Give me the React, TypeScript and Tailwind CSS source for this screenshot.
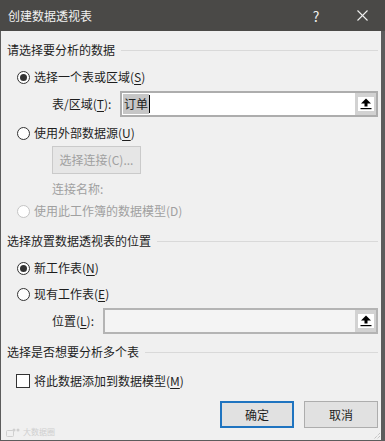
import React from "react";

const U = ({ children }: { children: React.ReactNode }) => (
  <span className="underline underline-offset-[2px] decoration-[1px]">{children}</span>
);

function Radio({ checked = false, disabled = false }: { checked?: boolean; disabled?: boolean }) {
  return (
    <span
      className={
        "w-[13px] h-[13px] rounded-full border flex items-center justify-center bg-white shrink-0 " +
        (disabled ? "border-[#c4c4c4]" : "border-[#333333]")
      }
    >
      {checked && <span className="w-[7px] h-[7px] rounded-full bg-[#333333]" />}
    </span>
  );
}

function UpArrow() {
  return (
    <svg width="12" height="12" viewBox="0 0 12 12">
      <polygon points="6,0.5 11,5.5 1,5.5" fill="#000" />
      <rect x="4.5" y="5" width="3" height="3.5" fill="#000" />
      <rect x="0.5" y="10" width="11" height="1.2" fill="#000" />
    </svg>
  );
}

function RefButton() {
  return (
    <div className="w-[21px] h-full bg-[#d2d2d2] flex items-center justify-center">
      <div className="w-[16px] h-[14px] bg-white flex items-center justify-center">
        <UpArrow />
      </div>
    </div>
  );
}

function Section({ title, className = "" }: { title: string; className?: string }) {
  return (
    <div className={"h-[20px] flex items-center pl-[6px] pr-[3px] " + className}>
      <span className="text-[#1e1e1e] whitespace-nowrap">{title}</span>
      <span className="flex-1 h-px bg-[#d9d9d9] ml-[6px]" />
    </div>
  );
}

export default function App() {
  return (
    <div
      className="w-[385px] h-[441px] flex flex-col bg-[#f0f0f0] relative text-[12px] leading-[16px] text-[#1e1e1e] overflow-hidden"
      style={{ fontFamily: '"Noto Sans CJK SC", "Noto Sans", sans-serif' }}
    >
      {/* Title bar */}
      <div className="h-[31px] bg-[#4a4947] flex items-center shrink-0">
        <div className="flex-1 pl-[8px] text-[#f2f2f2] text-[12px]">创建数据透视表</div>
        <div className="w-[46px] h-full flex items-center justify-center text-[#f0f0f0] text-[14px]">?</div>
        <div className="w-[46px] h-full flex items-center justify-center">
          <svg width="11" height="11" viewBox="0 0 11 11">
            <line x1="0.5" y1="0.5" x2="10.5" y2="10.5" stroke="#f0f0f0" strokeWidth="1.1" />
            <line x1="10.5" y1="0.5" x2="0.5" y2="10.5" stroke="#f0f0f0" strokeWidth="1.1" />
          </svg>
        </div>
      </div>

      {/* Body */}
      <div className="flex-1 flex flex-col border-l border-r-[4px] border-b border-[#5c5c5c]">
        <Section title="请选择要分析的数据" className="mt-[9px]" />

        <div className="mt-[7px] h-[20px] flex items-center pl-[16px] gap-[4px]">
          <Radio checked />
          <span>
            选择一个表或区域(<U>S</U>)
          </span>
        </div>

        <div className="mt-[4px] h-[26px] flex items-center pl-[51px]">
          <span className="w-[68px] whitespace-nowrap">
            表/区域(<U>T</U>):
          </span>
          <div className="w-[258px] h-[26px] border-2 border-[#adadad] bg-white flex items-stretch">
            <div className="flex-1 flex items-center pl-[1px]">
              <span className="bg-[#c6c6c6] text-[#1e1e1e] px-[1px] leading-[20px]">订单</span>
              <span className="w-px h-[18px] bg-black" />
            </div>
            <RefButton />
          </div>
        </div>

        <div className="mt-[6px] h-[20px] flex items-center pl-[16px] gap-[4px]">
          <Radio />
          <span>
            使用外部数据源(<U>U</U>)
          </span>
        </div>

        <div className="mt-[3px] pl-[51px]">
          <div className="w-[89px] h-[28px] border border-[#cacaca] bg-[#e6e6e6] flex items-center justify-center text-[#a0a0a0]">
            选择连接(C)...
          </div>
        </div>

        <div className="mt-[5px] h-[20px] flex items-center pl-[51px] text-[#a0a0a0]">连接名称:</div>

        <div className="mt-[2px] h-[20px] flex items-center pl-[16px] gap-[4px] text-[#a0a0a0]">
          <Radio disabled />
          <span>使用此工作簿的数据模型(D)</span>
        </div>

        <Section title="选择放置数据透视表的位置" className="mt-[10px]" />

        <div className="mt-[7px] h-[20px] flex items-center pl-[16px] gap-[4px]">
          <Radio checked />
          <span>
            新工作表(<U>N</U>)
          </span>
        </div>

        <div className="mt-[6px] h-[20px] flex items-center pl-[16px] gap-[4px]">
          <Radio />
          <span>
            现有工作表(<U>E</U>)
          </span>
        </div>

        <div className="mt-[4px] h-[26px] flex items-center pl-[51px]">
          <span className="w-[51px] whitespace-nowrap">
            位置(<U>L</U>):
          </span>
          <div className="w-[275px] h-[26px] border-2 border-[#b4b4b4] bg-[#f4f4f4] flex items-stretch">
            <div className="flex-1" />
            <RefButton />
          </div>
        </div>

        <Section title="选择是否想要分析多个表" className="mt-[8px]" />

        <div className="mt-[9px] h-[20px] flex items-center pl-[15px] gap-[4px]">
          <span className="w-[14px] h-[14px] border border-[#333333] bg-white shrink-0" />
          <span>
            将此数据添加到数据模型(<U>M</U>)
          </span>
        </div>

        <div className="mt-[10px] flex justify-end gap-[10px] pr-[3px]">
          <div className="w-[74px] h-[27px] border-2 border-[#1f74c0] bg-[#e1e1e1] flex items-center justify-center">
            确定
          </div>
          <div className="w-[74px] h-[27px] border border-[#adadad] bg-[#e1e1e1] flex items-center justify-center">
            取消
          </div>
        </div>
      </div>

      {/* watermark */}
      <div className="absolute left-[6px] bottom-[4px] flex items-center gap-[2px] text-[#cfcfcf] text-[8px] leading-[10px]">
        <svg width="15" height="9" viewBox="0 0 15 9">
          <rect x="0.5" y="2.5" width="7" height="6" rx="1" fill="none" stroke="#cfcfcf" />
          <circle cx="8" cy="2" r="1.5" fill="#cfcfcf" />
          <circle cx="12" cy="2" r="1.5" fill="#cfcfcf" />
        </svg>
        <span>大数据圈</span>
      </div>

      {/* resize grip */}
      <svg className="absolute right-[4px] bottom-[1px]" width="8" height="8" viewBox="0 0 8 8">
        <line x1="7" y1="1" x2="1" y2="7" stroke="#b0b0b0" strokeWidth="1" strokeDasharray="1 1" />
        <line x1="7" y1="4" x2="4" y2="7" stroke="#b0b0b0" strokeWidth="1" strokeDasharray="1 1" />
      </svg>
    </div>
  );
}
